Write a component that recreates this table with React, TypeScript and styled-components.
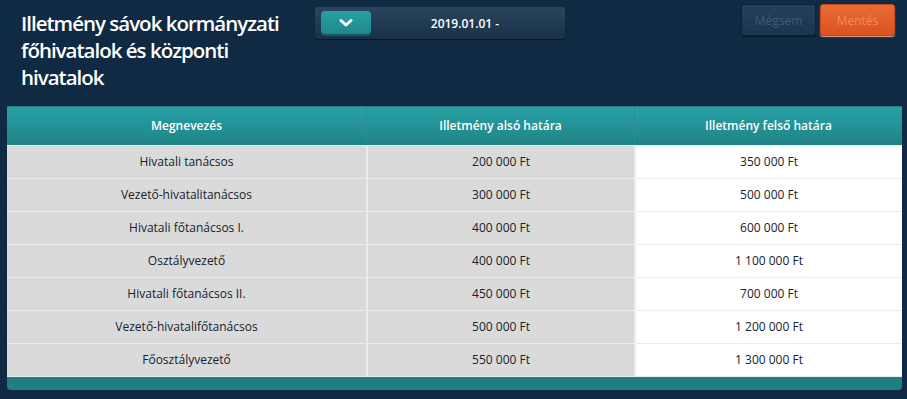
import styled, { createGlobalStyle } from "styled-components";

const GlobalStyle = createGlobalStyle`
  html, body {
    margin: 0;
    padding: 0;
    background-color: #0f2a42;
  }
  body {
    font-family: "Open Sans", "Liberation Sans", sans-serif;
  }
`;

const colors = {
  page: "#0f2a42",
  tealDark: "#207f83",
  cellGrey: "#dadada",
  line: "#ececec",
  text: "#17222d",
};

const StyledPage = styled.div`
  width: 907px;
  height: 399px;
  box-sizing: border-box;
  padding: 4px 5px 9px 7px;
  display: flex;
  flex-direction: column;
`;

const StyledTopBar = styled.div`
  display: flex;
  align-items: flex-start;
  height: 102px;
`;

const StyledTitle = styled.h1`
  margin: 6px 0 0 14px;
  width: 290px;
  color: #ffffff;
  font-size: 20.5px;
  line-height: 27px;
  font-weight: 600;
  letter-spacing: -1px;
`;

const StyledDateBox = styled.div`
  margin: 3px 0 0 4px;
  width: 250px;
  height: 32px;
  box-sizing: border-box;
  padding: 4px 6px 0;
  display: flex;
  align-items: flex-start;
  border-radius: 3px;
  background: linear-gradient(#2a455c, #183148);
  box-shadow: 0 1px 1px rgba(0, 0, 0, 0.5);
`;

const StyledDateToggle = styled.button`
  width: 50px;
  height: 23px;
  padding: 0;
  border: none;
  border-radius: 4px;
  display: flex;
  align-items: center;
  justify-content: center;
  background: linear-gradient(#27a2a7, #1f878b);
  box-shadow: 0 2px 0 #145a62;
`;

const StyledDateText = styled.span`
  flex: 1;
  margin-top: 4px;
  text-align: center;
  color: #ffffff;
  font-size: 12px;
  font-weight: 600;
`;

const StyledActions = styled.div`
  margin-left: auto;
  margin-right: 7px;
  display: flex;
  gap: 4px;
`;

const StyledActionButton = styled.button<{ $primary?: boolean }>`
  width: 75px;
  height: 32px;
  border-radius: 3px;
  font-family: "Open Sans", "Liberation Sans", sans-serif;
  font-size: 12px;
  border: 1px solid ${(p) => (p.$primary ? "#c7481b" : "#0c2236")};
  color: ${(p) => (p.$primary ? "#f28a5c" : "#3f5c74")};
  background: ${(p) =>
    p.$primary
      ? "linear-gradient(#ea6a37, #d9531f)"
      : "linear-gradient(#24405a, #1a3550)"};
  box-shadow: ${(p) =>
    p.$primary ? "0 1px 1px #e8a07d" : "0 1px 1px rgba(0, 0, 0, 0.4)"};
`;

const StyledTable = styled.div`
  border-top: 1px solid #2b7d85;
  border-radius: 0 0 4px 4px;
  overflow: hidden;
`;

const StyledGridRow = styled.div`
  display: grid;
  grid-template-columns: 359px 268px 1fr;
`;

const StyledHeaderCell = styled.div`
  height: 38px;
  display: flex;
  align-items: center;
  justify-content: center;
  color: #ffffff;
  font-size: 12px;
  font-weight: 600;
  background: linear-gradient(#27a1a6, #208386);
  border-left: 1px solid #239095;

  &:first-child {
    border-left: none;
  }
`;

const StyledCell = styled.div<{ $white?: boolean }>`
  height: 32px;
  display: flex;
  align-items: center;
  justify-content: center;
  color: ${colors.text};
  font-size: 12px;
  background-color: ${(p) => (p.$white ? "#ffffff" : colors.cellGrey)};
  border-top: 1px solid ${colors.line};
  border-left: 2px solid ${colors.line};

  &:first-child {
    border-left: none;
  }
`;

const StyledFooter = styled.div`
  height: 14px;
  background-color: ${colors.tealDark};
  border-top: 1px solid ${colors.line};
`;

const ChevronDown = () => (
  <svg width="14" height="10" viewBox="0 0 14 10">
    <path
      d="M2 2.5 L7 7 L12 2.5"
      fill="none"
      stroke="#ffffff"
      strokeWidth="3"
      strokeLinecap="round"
      strokeLinejoin="round"
    />
  </svg>
);

const rows = [
  ["Hivatali tanácsos", "200 000 Ft", "350 000 Ft"],
  ["Vezető-hivatalitanácsos", "300 000 Ft", "500 000 Ft"],
  ["Hivatali főtanácsos I.", "400 000 Ft", "600 000 Ft"],
  ["Osztályvezető", "400 000 Ft", "1 100 000 Ft"],
  ["Hivatali főtanácsos II.", "450 000 Ft", "700 000 Ft"],
  ["Vezető-hivatalifőtanácsos", "500 000 Ft", "1 200 000 Ft"],
  ["Főosztályvezető", "550 000 Ft", "1 300 000 Ft"],
];

const App = () => {
  return (
    <>
      <GlobalStyle />
      <StyledPage>
        <StyledTopBar>
          <StyledTitle>
            Illetmény sávok kormányzati főhivatalok és központi hivatalok
          </StyledTitle>
          <StyledDateBox>
            <StyledDateToggle>
              <ChevronDown />
            </StyledDateToggle>
            <StyledDateText>2019.01.01 -</StyledDateText>
          </StyledDateBox>
          <StyledActions>
            <StyledActionButton>Mégsem</StyledActionButton>
            <StyledActionButton $primary>Mentés</StyledActionButton>
          </StyledActions>
        </StyledTopBar>
        <StyledTable>
          <StyledGridRow>
            <StyledHeaderCell>Megnevezés</StyledHeaderCell>
            <StyledHeaderCell>Illetmény alsó határa</StyledHeaderCell>
            <StyledHeaderCell>Illetmény felső határa</StyledHeaderCell>
          </StyledGridRow>
          {rows.map(([name, low, high]) => (
            <StyledGridRow key={name}>
              <StyledCell>{name}</StyledCell>
              <StyledCell>{low}</StyledCell>
              <StyledCell $white>{high}</StyledCell>
            </StyledGridRow>
          ))}
          <StyledFooter />
        </StyledTable>
      </StyledPage>
    </>
  );
};

export default App;
